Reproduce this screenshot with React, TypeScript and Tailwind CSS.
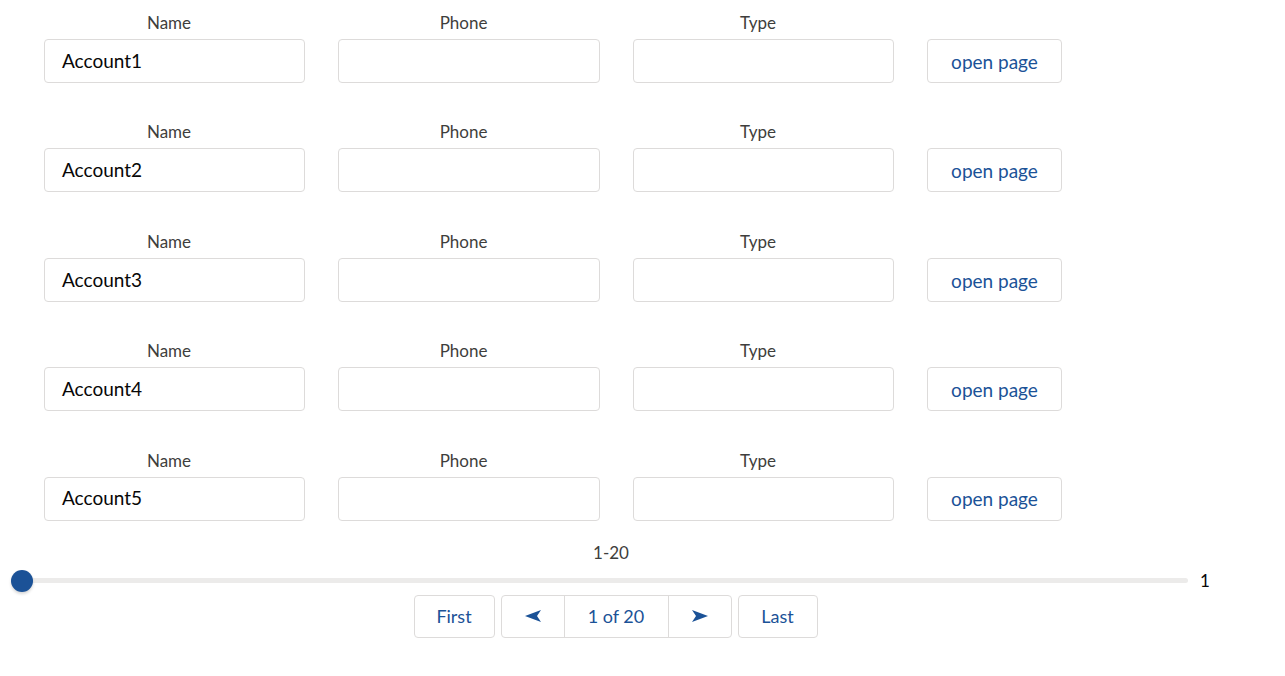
import React from 'react';

const rows = ['Account1', 'Account2', 'Account3', 'Account4', 'Account5'];

const Field = ({ label, value, width }: { label: string; value?: string; width: string }) => (
	<div className={`flex flex-col ${width}`}>
		<label className="mb-[6px] h-[20px] pr-[11px] text-center text-[17px] leading-[20px] text-[#3e3e3c]">
			{label}
		</label>
		<div className="flex h-[44px] items-center rounded-[4px] border border-[#dddbda] bg-white px-[17px] text-[19px] text-[#080707]">
			{value}
		</div>
	</div>
);

const Arrow = ({ dir }: { dir: 'left' | 'right' }) => (
	<svg width="16" height="12" viewBox="0 0 16 12" className={dir === 'left' ? 'rotate-180' : ''}>
		<path d="M0 0 L16 6 L0 12 L4 6 Z" fill="#1b5297" />
	</svg>
);

export default function App() {
	return (
		<div className="min-h-screen bg-white font-['Lato','Liberation_Sans',sans-serif]">
			<div className="pl-[44px] pt-[13px]">
				{rows.map((name) => (
					<div key={name} className="mb-[39.4px] flex gap-[33px]">
						<Field label="Name" value={name} width="w-[261px]" />
						<Field label="Phone" width="w-[262px]" />
						<Field label="Type" width="w-[261px]" />
						<div className="flex flex-col">
							<div className="mb-[6px] h-[20px]" />
							<button className="h-[44px] w-[135px] rounded-[4px] border border-[#dddbda] bg-white pt-[2px] text-[19px] text-[#1b5297]">
								open page
							</button>
						</div>
					</div>
				))}
			</div>

			<div className="-mt-[17px] flex w-[1222px] justify-center text-[17px] leading-[20px] text-[#3e3e3c]">
				1-20
			</div>

			<div className="mt-[6px] flex h-[24px] items-center pl-[11px]">
				<div className="relative h-[22px] w-[1177px]">
					<div className="absolute left-0 right-0 top-[8px] h-[5px] rounded-full bg-[#ecebea]" />
					<div className="absolute left-0 top-0 h-[22px] w-[22px] rounded-full bg-[#1b5297] shadow-[0_2px_3px_rgba(0,0,0,0.16)]" />
				</div>
				<span className="ml-[12px] text-[17px] text-[#080707]">1</span>
			</div>

			<div className="mt-[2px] flex w-[1231px] justify-center gap-[6px] text-[18px] text-[#1b5297]">
				<button className="h-[43px] w-[81px] rounded-[4px] border border-[#dddbda] bg-white">First</button>
				<div className="flex h-[43px] rounded-[4px] border border-[#dddbda] bg-white">
					<button className="flex w-[63px] items-center justify-center border-r border-[#dddbda]">
						<Arrow dir="left" />
					</button>
					<span className="flex w-[103px] items-center justify-center">1 of 20</span>
					<button className="flex w-[63px] items-center justify-center border-l border-[#dddbda]">
						<Arrow dir="right" />
					</button>
				</div>
				<button className="h-[43px] w-[80px] rounded-[4px] border border-[#dddbda] bg-white">Last</button>
			</div>
		</div>
	);
}
